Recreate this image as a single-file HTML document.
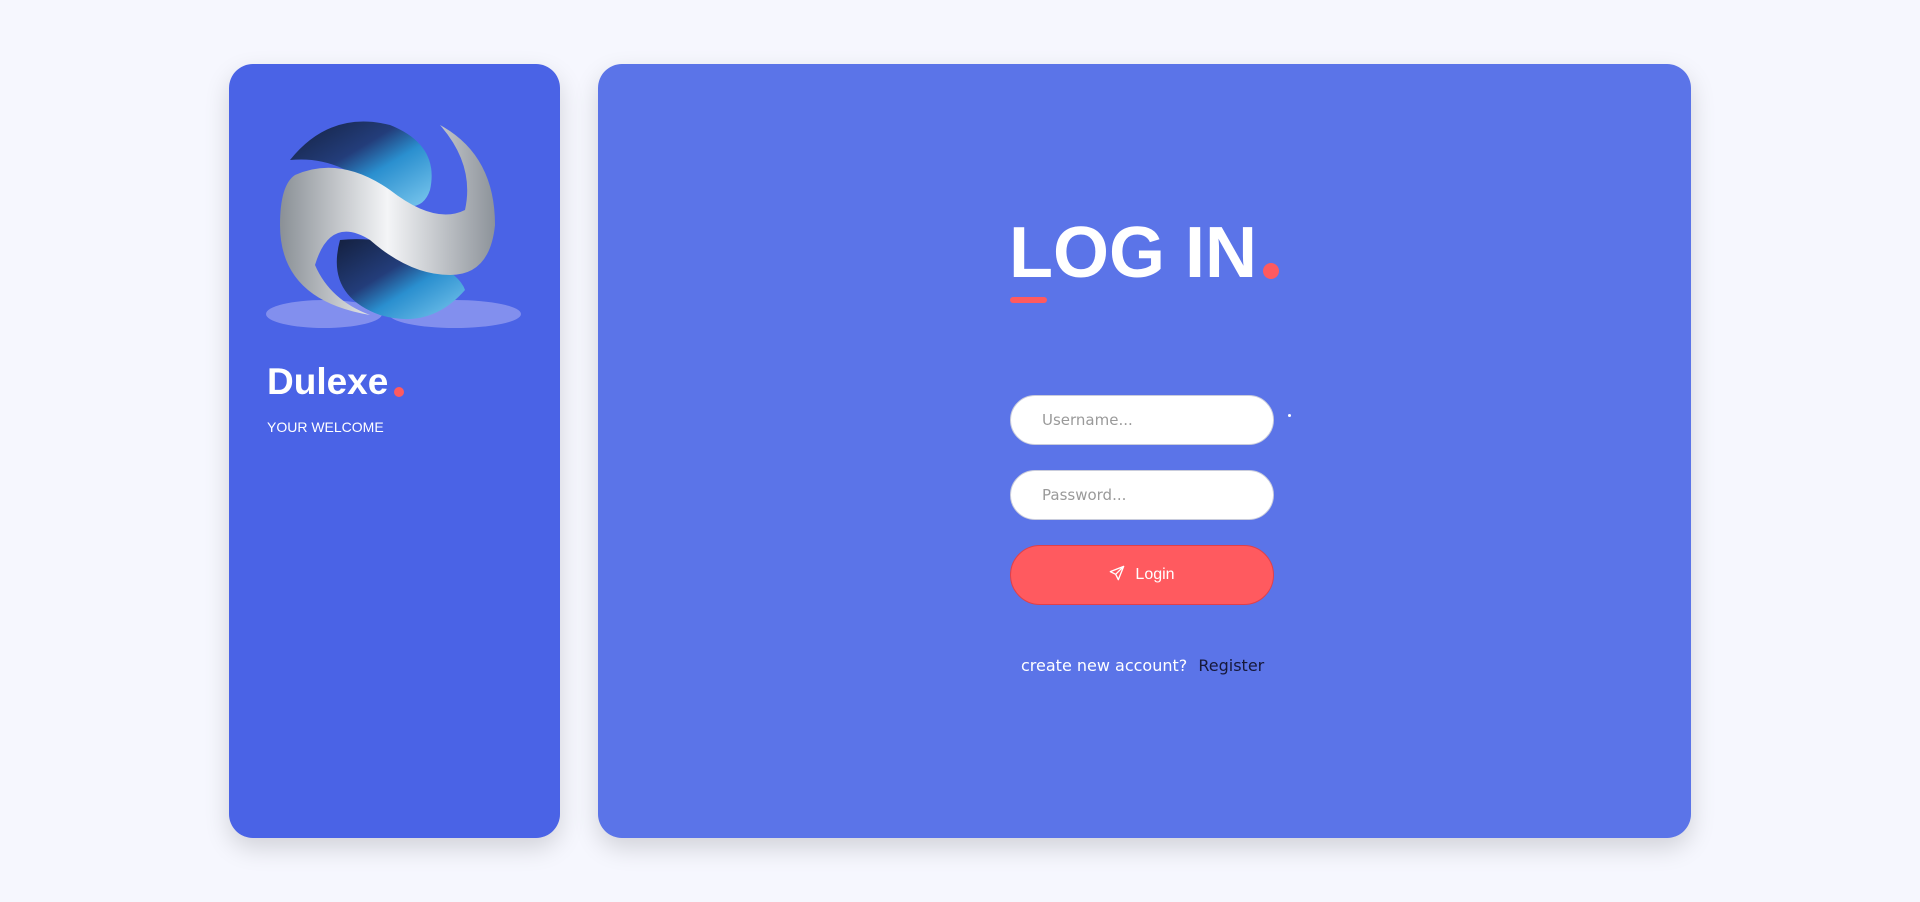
<!DOCTYPE html>
<html><head><meta charset="utf-8"><style>
*{margin:0;padding:0;box-sizing:border-box}
body{width:1920px;height:902px;background:#f6f7fe;font-family:"Liberation Sans",sans-serif;position:relative;overflow:hidden}
.card{position:absolute;top:64px;height:774px;border-radius:24px;box-shadow:0 10px 25px rgba(0,0,0,0.15)}
.l{left:229px;width:331px;background:#4a63e6}
.r{left:598px;width:1093px;background:#5b74e8}
.abs{position:absolute}
.inp{position:absolute;left:1010px;width:264px;height:50px;border-radius:25px;background:#fff;border:1px solid #c9ccdc;color:#9a9a9a;padding-left:31px;line-height:48px;font-family:"DejaVu Sans","Liberation Sans",sans-serif;font-size:15px}
</style></head><body>
<div class="card l"></div>
<div class="card r"></div>
<svg class="abs" style="left:260px;top:115px" width="270" height="220" viewBox="0 0 270 220">
<defs>
<linearGradient id="b" x1="0" y1="0" x2="1" y2="1"><stop offset="0" stop-color="#14203f"/><stop offset="0.4" stop-color="#233d7a"/><stop offset="0.6" stop-color="#2a8fcf"/><stop offset="1" stop-color="#7cc8ee"/></linearGradient>
<linearGradient id="s" x1="0" y1="0" x2="1" y2="0"><stop offset="0" stop-color="#8a9096"/><stop offset="0.5" stop-color="#f4f5f7"/><stop offset="1" stop-color="#8d939a"/></linearGradient>
</defs>
<ellipse cx="64" cy="199" rx="58" ry="14" fill="#8c97ef" opacity="0.85"/>
<ellipse cx="195" cy="199" rx="66" ry="14" fill="#8c97ef" opacity="0.85"/>
<path d="M30 45 Q70 -5 130 10 Q180 30 170 75 Q160 105 120 80 Q80 40 30 45Z" fill="url(#b)"/>
<path d="M80 125 Q130 120 170 145 Q200 160 205 175 Q170 215 120 200 Q65 180 80 125Z" fill="url(#b)"/>
<path d="M35 60 Q80 40 130 75 Q175 110 205 95 Q215 50 180 10 Q235 40 235 110 Q230 160 190 160 Q150 160 110 125 Q70 100 55 150 Q70 185 110 200 Q20 185 20 110 Q20 70 35 60Z" fill="url(#s)"/>
</svg>
<div class="abs" style="left:267px;top:361px;color:#fff;font-weight:bold;font-size:37px">Dulexe</div>
<div class="abs" style="left:394px;top:387px;width:10px;height:10px;border-radius:50%;background:#ff5a5f"></div>
<div class="abs" style="left:267px;top:419px;color:#fff;font-size:14px">YOUR WELCOME</div>
<div class="abs" style="left:1009px;top:212px;color:#fff;font-weight:bold;font-size:72px;letter-spacing:0;line-height:82px">LOG IN</div>
<div class="abs" style="left:1263px;top:263px;width:16px;height:16px;border-radius:50%;background:#ff5a5f"></div>
<div class="abs" style="left:1010px;top:297px;width:37px;height:6px;border-radius:3px;background:#ff5a5f"></div>
<div class="inp" style="top:395px">Username...</div>
<div class="abs" style="left:1288px;top:414px;width:3px;height:3px;border-radius:50%;background:#fff"></div>
<div class="inp" style="top:470px">Password...</div>
<div class="abs" style="left:1010px;top:545px;width:264px;height:60px;border-radius:30px;background:#ff5a5f;border:1px solid #e0404a;color:#fff;font-size:16px;line-height:58px;text-align:center">
<svg width="16" height="16" viewBox="0 0 24 24" style="vertical-align:-2px;margin-right:10px" fill="none" stroke="#fff" stroke-width="2" stroke-linejoin="round"><path d="M22 2L2 10l8 4 4 8 8-20zM10 14l12-12"/></svg>Login</div>
<div class="abs" style="left:1021px;top:656px;color:#fff;font-family:'DejaVu Sans','Liberation Sans',sans-serif;font-size:16px">create new account? <span style="color:#16183a;margin-left:6px">Register</span></div>
</body></html>
